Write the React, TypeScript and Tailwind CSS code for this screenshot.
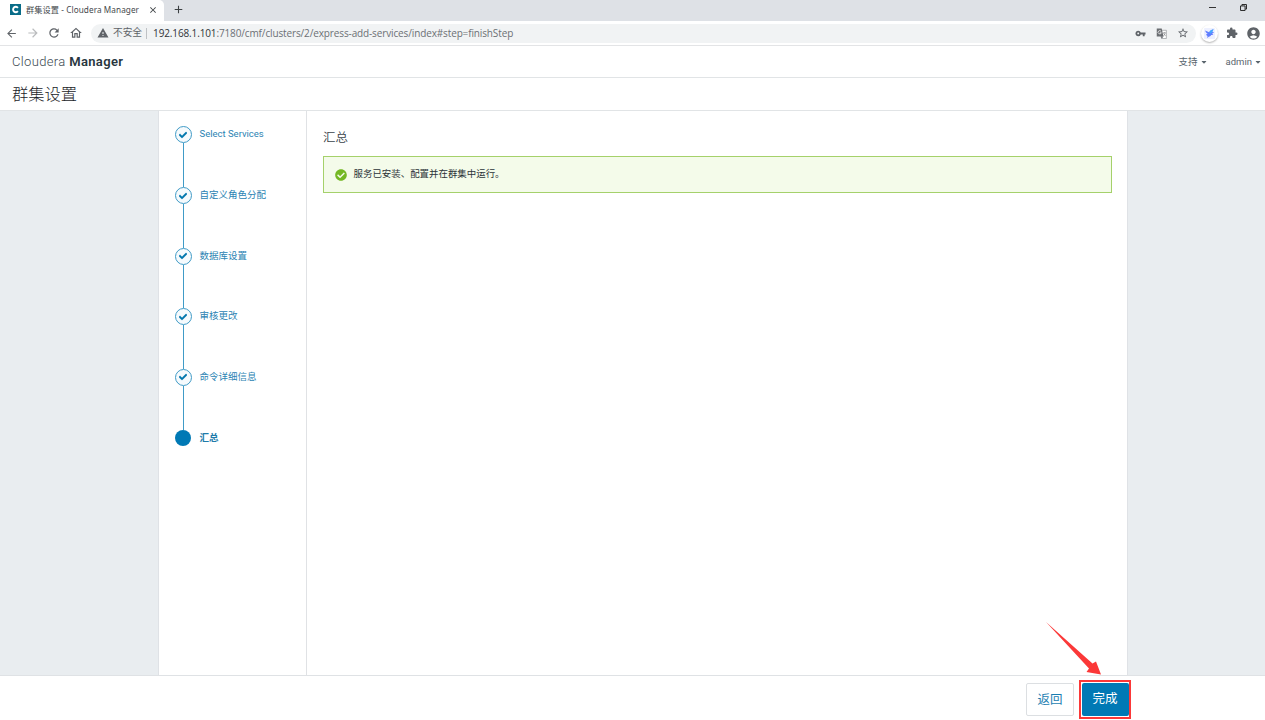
import clsx from "clsx";
import { FaCaretDown, FaCheck, FaCheckCircle } from "react-icons/fa";
import {
  MdAccountCircle,
  MdAdd,
  MdArrowBack,
  MdArrowForward,
  MdClose,
  MdExtension,
  MdOutlineHome,
  MdRefresh,
  MdStarBorder,
  MdVpnKey,
  MdWarning,
} from "react-icons/md";

interface Step {
  label: string;
  done: boolean;
}

const STEPS: Step[] = [
  { label: "Select Services", done: true },
  { label: "自定义角色分配", done: true },
  { label: "数据库设置", done: true },
  { label: "审核更改", done: true },
  { label: "命令详细信息", done: true },
  { label: "汇总", done: false },
];

function TranslateIcon() {
  return (
    <svg viewBox="0 0 12 12" className="size-[11px] shrink-0">
      <path d="M4.5 2.5h6.8v9H6z" fill="#fff" stroke="#8b8e91" strokeWidth="0.7" />
      <path d="M.8.5h5.4l2 8.8H.8z" fill="#6b6e72" />
      <path d="M5.6 3.7A1.8 1.8 0 1 0 5.8 5.2H4.2" fill="none" stroke="#fff" strokeWidth="0.8" />
      <path d="M7.7 5.2h3M9.2 4.4v.8M8 5.5l2.5 3M10.3 5.3 8.3 8.7" stroke="#77797c" strokeWidth="0.6" />
      <path d="M5.2 9.3h3l-1.8 2.2z" fill="#5f6368" />
    </svg>
  );
}

function BirdIcon() {
  return (
    <span className="flex size-[17px] items-center justify-center rounded-full bg-white shadow-[0_1px_2px_rgba(0,0,0,0.3)]">
      <svg viewBox="0 0 12 12" className="size-[11px]">
        <rect width="12" height="12" rx="1" fill="#edf0ff" />
        <path d="M1.2 2.6 5.6 4.6C6.6 3 8 1.8 10.4 1.4L8.9 4.4l2.2.3-2.3 1.6 1.4 1.3-2.3.1C7.2 9 6.2 9.5 5.2 9.5L3.4 10.8l.5-2C2.9 8.3 2.4 7.4 2.5 6.5l1.6.1C2.6 5.4 1.7 4.2 1.2 2.6z" fill="#617cff" />
        <path d="M5.6 4.6C6.6 3 8 1.8 10.4 1.4L8.9 4.4 7 6.2z" fill="#43aaff" />
      </svg>
    </span>
  );
}

function BrowserChrome() {
  return (
    <div className="shrink-0">
      <div className="flex h-[21px] bg-[#dee1e6]">
        <div className="flex h-full w-[164px] items-center rounded-tr-[5px] bg-white pl-[10px] pr-[6px]">
          <svg viewBox="0 0 11 11" className="mt-[-3px] size-[11px] shrink-0">
            <rect width="11" height="11" fill="#096c88" />
            <path d="M7.9 3.8A2.7 2.7 0 1 0 7.9 7.2" fill="none" stroke="#fff" strokeWidth="1.9" />
          </svg>
          <span className="mt-[-1px] ml-[5px] flex-1 font-['Noto_Sans','Noto_Sans_CJK_SC',sans-serif] text-[8.2px] tracking-[0.08px] whitespace-nowrap text-[#45494d]">
            群集设置 - Cloudera Manager
          </span>
          <MdClose className="mt-[-2px] size-[10px] shrink-0 text-[#3c4043]" />
        </div>
        <MdAdd className="mt-[3px] ml-[8px] size-[13px] text-[#3c4043]" />
        <div className="ml-auto flex pr-[18px]">
          <span className="mt-[7px] mr-[24px] h-px w-[7px] bg-[#333]" />
          <svg viewBox="0 0 8 8" className="mt-[4px] size-[7px]" fill="none" stroke="#222" strokeWidth="1.1">
            <path d="M.6 2.2h5.2v5.2H.6zM2.2 2V.6h5.2v5.2H6" />
          </svg>
        </div>
      </div>

      <div className="flex h-[25px] items-center border-b border-[#e3e4e6] bg-white pl-[5px] pr-[4px] text-[#5f6368]">
        <MdArrowBack className="size-[13px]" />
        <MdArrowForward className="ml-[8px] size-[14px] text-[#babcbe]" />
        <MdRefresh className="ml-[7px] size-[14px]" />
        <MdOutlineHome className="ml-[8px] size-[14px]" />
        <div className="ml-[8px] flex h-[19px] w-[1105px] items-center rounded-full bg-[#f1f3f4] pl-[6px] pr-[7px]">
          <MdWarning className="size-[12px]" />
          <span className="ml-[4px] pt-px text-[9.7px]">不安全</span>
          <span className="ml-[4px] h-[11px] w-px bg-[#bfc2c5]" />
          <span className="ml-[6px] flex-1 font-['Open_Sans','Noto_Sans',sans-serif] text-[10px] tracking-[-0.13px] text-[#6c7074]">
            <span className="text-[#303438]">192.168.1.101</span>
            :7180/cmf/clusters/2/express-add-services/index#step=finishStep
          </span>
          <span className="flex items-center gap-[10px]">
            <MdVpnKey className="size-[11px]" />
            <TranslateIcon />
            <MdStarBorder className="size-[12px]" />
          </span>
        </div>
        <span className="ml-auto flex items-center gap-[8px]">
          <BirdIcon />
          <MdExtension className="size-[12px]" />
          <MdAccountCircle className="size-[15px]" />
        </span>
      </div>
    </div>
  );
}

function AppHeader() {
  return (
    <header className="flex h-[32px] shrink-0 items-center justify-between border-b border-[#e1e4e6] pl-3 pr-[3px]">
      <div className="text-[13px] font-light tracking-[0.35px] text-[#3c4a52]">
        Cloudera <span className="font-semibold text-[#28363e]">Manager</span>
      </div>
      <nav className="flex items-center gap-[18px] pt-px text-[9.5px] text-[#5a656d]">
        <span className="flex items-center gap-[2px]">
          支持 <FaCaretDown className="size-[8px]" />
        </span>
        <span className="flex items-center gap-[2px]">
          admin <FaCaretDown className="size-[8px]" />
        </span>
      </nav>
    </header>
  );
}

function StepList() {
  return (
    <aside className="w-[148px] shrink-0 border-r border-[#e0e2e5] pt-[15.4px] pl-[15.5px]">
      {STEPS.map((step, i) => (
        <div key={step.label} className="flex h-[60.65px] gap-2">
          <div className="flex w-[17px] flex-col items-center">
            {step.done ? (
              <span className="flex size-[17px] shrink-0 items-center justify-center rounded-full border border-[#409bc7] bg-[#f5fafd]">
                <FaCheck className="size-[8px] stroke-[#0076ad] stroke-[40] text-[#0076ad]" />
              </span>
            ) : (
              <span className="size-[16.5px] shrink-0 rounded-full bg-[#0079b5]" />
            )}
            {i < STEPS.length - 1 ? <span className="w-px flex-1 bg-[#409bc7]" /> : null}
          </div>
          <span
            className={clsx(
              "h-[15px] text-[9.5px] leading-[15px] whitespace-nowrap",
              step.done ? "text-[#2b83b3]" : "font-bold text-[#207baa]",
            )}
          >
            {step.label}
          </span>
        </div>
      ))}
    </aside>
  );
}

export default function App() {
  return (
    <div className="flex h-[720px] w-[1265px] flex-col overflow-hidden bg-white font-[Roboto,'Noto_Sans_CJK_SC',sans-serif]">
      <BrowserChrome />
      <AppHeader />
      <h1 className="flex h-[33px] shrink-0 items-center border-b border-[#e1e4e6] pt-[2px] pl-3 text-[16.3px] font-light text-[#1b2328]">
        群集设置
      </h1>

      <div className="flex flex-1 justify-center bg-[#e9edf0] pl-[21px]">
        <div className="flex w-[970px] border-x border-[#dfe2e6] bg-white">
          <StepList />
          <main className="flex-1 pt-[18px] pr-[15.5px] pl-4">
            <h2 className="text-[12.5px] leading-[18px] font-[350] text-[#39434a]">汇总</h2>
            <div className="mt-[9px] flex h-[37px] items-center border border-[#a5d16b] bg-[#f4fbea] pl-[10.5px] text-[9.45px] text-[#2c3338]">
              <FaCheckCircle className="size-[12px] text-[#74b824]" />
              <span className="ml-[7px]">服务已安装、配置并在群集中运行。</span>
            </div>
          </main>
        </div>
      </div>

      <footer className="relative flex h-[45px] shrink-0 border-t border-[#dfe2e5] bg-white pl-[1026px] text-[12.5px]">
        <button type="button" className="mt-[7px] h-[33px] w-[48px] rounded-[2px] border border-[#dcdfe2] pt-px text-[#1b7eb1]">
          返回
        </button>
        <div className="mt-[4px] ml-[5px] flex h-[39px] w-[52px] items-center justify-center border-2 border-[#fb3838]">
          <button type="button" className="h-[33px] w-[47px] rounded-[2px] bg-[#0079b5] text-white">
            完成
          </button>
        </div>
        {/* pointer to the finish button */}
        <svg viewBox="0 0 60 56" className="absolute -top-[56px] left-[1044px] h-[56px] w-[60px]">
          <path d="M2 2 48.5 43.5 52 41.5 57 54.5 42.5 52 45 48.5z" fill="#fb3838" />
        </svg>
      </footer>
    </div>
  );
}
